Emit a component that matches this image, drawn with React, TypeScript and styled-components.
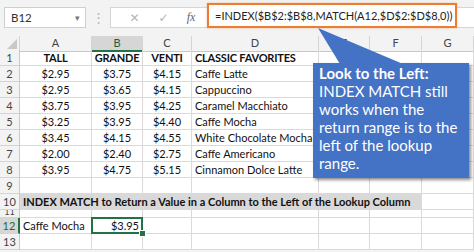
import styled, { createGlobalStyle } from 'styled-components'

const GlobalStyle = createGlobalStyle`
  body {
    margin: 0;
    overflow: hidden;
    font-family: Lato, "Liberation Sans", sans-serif;
  }
`

const COLS = '20px 72px 51px 49px 127px 51px 52px 52px'

const rows = [
  ['$2.95', '$3.75', '$4.15', 'Caffe Latte'],
  ['$2.95', '$3.65', '$4.15', 'Cappuccino'],
  ['$3.75', '$3.95', '$4.25', 'Caramel Macchiato'],
  ['$3.25', '$3.95', '$4.40', 'Caffe Mocha'],
  ['$3.45', '$4.15', '$4.55', 'White Chocolate Mocha'],
  ['$2.00', '$2.40', '$2.75', 'Caffe Americano'],
  ['$3.95', '$4.75', '$5.15', 'Cinnamon Dolce Latte'],
]

const calloutLines = [
  'INDEX MATCH still',
  'works when the',
  'return range is to the',
  'left of the lookup',
  'range.',
]

const App = () => {
  return (
    <Window>
      <GlobalStyle />
      <FormulaBar>
        <NameBox>
          <span>B12</span>
          <Caret>▾</Caret>
        </NameBox>
        <Grip>⋮</Grip>
        <InputStrip>
          <ToolIcon>✕</ToolIcon>
          <ToolIcon>✓</ToolIcon>
          <Fx>fx</Fx>
          <Formula>=INDEX($B$2:$B$8,MATCH(A12,$D$2:$D$8,0))</Formula>
        </InputStrip>
      </FormulaBar>

      <Sheet>
        <Row $h={14}>
          <Corner>
            <svg width="10" height="10" viewBox="0 0 10 10">
              <polygon points="10,0 10,10 0,10" fill="#c8c8c8" />
            </svg>
          </Corner>
          {['A', 'B', 'C', 'D', 'E', 'F', 'G'].map((c) => (
            <ColHead key={c} $active={c === 'B'}>{c}</ColHead>
          ))}
        </Row>

        <Row $h={16}>
          <RowHead>1</RowHead>
          <Cell $align="center" $bold>TALL</Cell>
          <Cell $align="center" $bold>GRANDE</Cell>
          <Cell $align="center" $bold>VENTI</Cell>
          <Cell $bold>CLASSIC FAVORITES</Cell>
          <Cell />
          <Cell />
          <Cell />
        </Row>

        {rows.map((r, i) => (
          <Row $h={16} key={i}>
            <RowHead>{i + 2}</RowHead>
            <Cell $align="center">{r[0]}</Cell>
            <Cell $align="center">{r[1]}</Cell>
            <Cell $align="center">{r[2]}</Cell>
            <Cell>{r[3]}</Cell>
            <Cell />
            <Cell />
            <Cell />
          </Row>
        ))}

        <Row $h={16}>
          <RowHead>9</RowHead>
          <Cell /><Cell /><Cell /><Cell /><Cell /><Cell /><Cell />
        </Row>

        <Row $h={16}>
          <RowHead>10</RowHead>
          <Banner>INDEX MATCH to Return a Value in a Column to the Left of the Lookup Column</Banner>
          <Cell />
        </Row>

        <Row $h={8}>
          <RowHead $clip>11</RowHead>
          <Cell /><Cell /><Cell /><Cell /><Cell /><Cell /><Cell />
        </Row>

        <Row $h={16}>
          <RowHead $active>12</RowHead>
          <Cell>Caffe Mocha</Cell>
          <Cell $align="right" $selected>$3.95</Cell>
          <Cell /><Cell /><Cell /><Cell /><Cell />
        </Row>

        <Row $h={16}>
          <RowHead>13</RowHead>
          <Cell /><Cell /><Cell /><Cell /><Cell /><Cell /><Cell />
        </Row>
      </Sheet>

      <Callout>
        <Tail width="90" height="36" viewBox="0 0 90 36">
          <polygon points="5,0 27,36 90,36" fill="#4472c4" />
        </Tail>
        <CalloutTitle>Look to the Left:</CalloutTitle>
        {calloutLines.map((l) => (
          <CalloutLine key={l}>{l}</CalloutLine>
        ))}
      </Callout>
    </Window>
  )
}

export default App

const Window = styled.div`
  position: relative;
  width: 474px;
  height: 252px;
  overflow: hidden;
  background: #f3f3f3;
`

const FormulaBar = styled.div`
  height: 36px;
  display: flex;
  align-items: flex-start;
  padding-top: 7px;
  box-sizing: border-box;
`

const NameBox = styled.div`
  width: 82px;
  height: 21px;
  margin-left: 4px;
  box-sizing: border-box;
  background: #fff;
  border: 1px solid #cfcfcf;
  display: flex;
  align-items: center;
  justify-content: space-between;
  padding: 0 5px 0 6px;
  font-size: 11.5px;
  color: #333;
`

const Caret = styled.span`
  font-size: 9px;
  color: #777;
`

const Grip = styled.div`
  width: 24px;
  text-align: center;
  color: #b8b8b8;
  font-size: 13px;
  line-height: 21px;
`

const InputStrip = styled.div`
  flex: 1;
  height: 21px;
  background: #fff;
  border: 1px solid #d6d6d6;
  border-right: 0;
  box-sizing: border-box;
  display: flex;
  align-items: center;
  padding-left: 9px;
`

const ToolIcon = styled.span`
  width: 29px;
  text-align: center;
  color: #b4b4b4;
  font-size: 12px;
  font-family: "DejaVu Sans", sans-serif;
`

const Fx = styled.span`
  width: 26px;
  text-align: center;
  color: #666;
  font-size: 12px;
  font-style: italic;
  font-family: "Liberation Serif", serif;
`

const Formula = styled.div`
  margin-top: -5px;
  margin-left: 3px;
  width: 250px;
  height: 25px;
  box-sizing: border-box;
  border: 2.5px solid #ed7d31;
  box-shadow: 0 0 2px rgba(237, 125, 49, 0.5);
  background: #fff;
  display: flex;
  align-items: center;
  padding-left: 6px;
  font-size: 11px;
  color: #222;
  white-space: nowrap;
`

const Sheet = styled.div`
  background: #fff;
`

const Row = styled.div<{ $h: number }>`
  display: grid;
  grid-template-columns: ${COLS};
  height: ${(p) => p.$h}px;
  font-size: 11px;
  color: #111;
`

const Corner = styled.div`
  background: #f3f3f3;
  border-right: 1px solid #d4d4d4;
  border-bottom: 1px solid #c8c8c8;
  display: flex;
  align-items: flex-end;
  justify-content: flex-end;
  padding: 0 2px 2px 0;
`

const ColHead = styled.div<{ $active?: boolean }>`
  background: ${(p) => (p.$active ? '#d6d6d6' : '#f3f3f3')};
  color: ${(p) => (p.$active ? '#1e5c38' : '#444')};
  border-right: 1px solid #d4d4d4;
  border-bottom: ${(p) => (p.$active ? '2px solid #217346' : '1px solid #c8c8c8')};
  text-align: center;
  line-height: 14px;
  font-size: 11px;
`

const RowHead = styled.div<{ $active?: boolean; $clip?: boolean }>`
  background: ${(p) => (p.$active ? '#d6d6d6' : '#f3f3f3')};
  color: ${(p) => (p.$active ? '#1e6b41' : '#444')};
  border-right: ${(p) => (p.$active ? '2px solid #217346' : '1px solid #c8c8c8')};
  border-bottom: 1px solid #d4d4d4;
  text-align: center;
  line-height: ${(p) => (p.$clip ? '4px' : '15px')};
  font-size: ${(p) => (p.$clip ? '9px' : '11px')};
  overflow: hidden;
  box-sizing: border-box;
`

const Cell = styled.div<{ $align?: string; $bold?: boolean; $selected?: boolean }>`
  position: relative;
  border-right: 1px solid #dadada;
  border-bottom: 1px solid #dadada;
  text-align: ${(p) => p.$align || 'left'};
  font-weight: ${(p) => (p.$bold ? 700 : 400)};
  letter-spacing: ${(p) => (p.$bold ? '-0.2px' : '0')};
  line-height: 15px;
  padding: ${(p) => (p.$align === 'center' ? '0 1px' : '0 3px')};
  white-space: nowrap;
  box-sizing: border-box;
  ${(p) =>
    p.$selected &&
    `
    &::after {
      content: '';
      position: absolute;
      left: -1px;
      top: -1px;
      right: -1px;
      bottom: -1px;
      border: 2px solid #217346;
    }
    &::before {
      content: '';
      position: absolute;
      right: -4px;
      bottom: -4px;
      width: 5px;
      height: 5px;
      background: #217346;
      border: 1px solid #fff;
      z-index: 1;
    }
  `}
`

const Banner = styled.div`
  grid-column: span 6;
  background: #d9d9d9;
  border-bottom: 1px solid #dadada;
  border-right: 1px solid #dadada;
  font-weight: 700;
  line-height: 15px;
  padding: 0 3px;
  white-space: nowrap;
`

const Callout = styled.div`
  position: absolute;
  left: 313px;
  top: 63px;
  width: 156px;
  height: 115px;
  box-sizing: border-box;
  padding: 1px 6px 0 6px;
  background: #4472c4;
  box-shadow: 2px 2px 3px rgba(0, 0, 0, 0.45);
  color: #fff;
  font-size: 15px;
  line-height: 18px;
`

const Tail = styled.svg`
  position: absolute;
  left: 0;
  top: -35px;
  overflow: visible;
`

const CalloutTitle = styled.div`
  font-weight: 700;
`

const CalloutLine = styled.div`
  white-space: nowrap;
`
